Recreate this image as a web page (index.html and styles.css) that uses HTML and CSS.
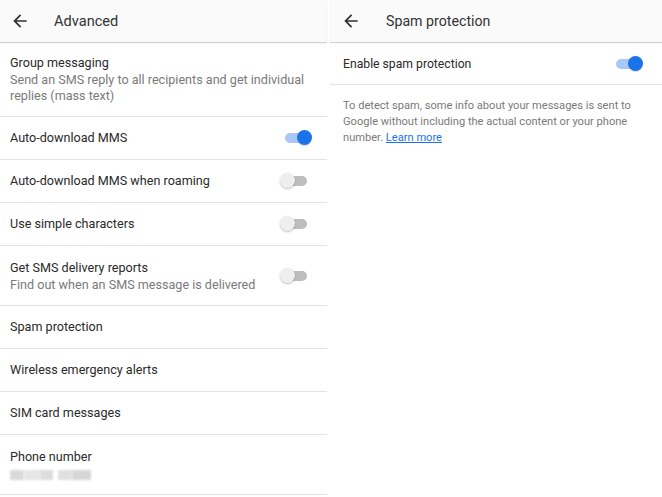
FILE: index.html
```html
<!DOCTYPE html>
<html>
<head>
<meta charset="utf-8">
<link rel="stylesheet" href="styles.css">
</head>
<body>
<div class="screens">
  <section class="panel left">
    <header class="appbar">
      <svg class="back" viewBox="0 0 24 24" width="20" height="20"><path d="M20 11H7.83l5.59-5.59L12 4l-8 8 8 8 1.41-1.41L7.83 13H20v-2z"/></svg>
      <span class="title">Advanced</span>
    </header>
    <div class="list">
      <div class="row tall">
        <div class="txt">
          <div class="primary">Group messaging</div>
          <div class="secondary">Send an SMS reply to all recipients and get individual replies (mass text)</div>
        </div>
      </div>
      <div class="row">
        <div class="txt"><div class="primary">Auto-download MMS</div></div>
        <span class="switch on"></span>
      </div>
      <div class="row">
        <div class="txt"><div class="primary">Auto-download MMS when roaming</div></div>
        <span class="switch"></span>
      </div>
      <div class="row">
        <div class="txt"><div class="primary">Use simple characters</div></div>
        <span class="switch"></span>
      </div>
      <div class="row two">
        <div class="txt">
          <div class="primary">Get SMS delivery reports</div>
          <div class="secondary">Find out when an SMS message is delivered</div>
        </div>
        <span class="switch"></span>
      </div>
      <div class="row">
        <div class="txt"><div class="primary">Spam protection</div></div>
      </div>
      <div class="row">
        <div class="txt"><div class="primary">Wireless emergency alerts</div></div>
      </div>
      <div class="row">
        <div class="txt"><div class="primary">SIM card messages</div></div>
      </div>
      <div class="row two">
        <div class="txt">
          <div class="primary">Phone number</div>
          <div class="blurred"><span class="b1"></span><span class="b2"></span><span class="b3"></span><span class="gap"></span><span class="b4"></span><span class="b5"></span></div>
        </div>
      </div>
    </div>
  </section>
  <section class="panel right">
    <header class="appbar">
      <svg class="back" viewBox="0 0 24 24" width="20" height="20"><path d="M20 11H7.83l5.59-5.59L12 4l-8 8 8 8 1.41-1.41L7.83 13H20v-2z"/></svg>
      <span class="title">Spam protection</span>
    </header>
    <div class="list">
      <div class="row">
        <div class="txt"><div class="primary">Enable spam protection</div></div>
        <span class="switch on"></span>
      </div>
      <p class="note">To detect spam, some info about your messages is sent to Google without including the actual content or your phone number. <a href="#">Learn more</a></p>
    </div>
  </section>
</div>
</body>
</html>
```

FILE: styles.css
```css
* { box-sizing: border-box; }
html, body { margin: 0; padding: 0; background: #fff; }
body {
  width: 662px;
  height: 497px;
  overflow: hidden;
  font-family: Roboto, "Noto Sans", Arial, sans-serif;
  color: #222;
}
.screens {
  display: flex;
  gap: 3px;
  height: 497px;
}
.panel { display: flex; flex-direction: column; }
.left { width: 327px; }
.right { flex: 1; }

.appbar {
  height: 42px;
  display: flex;
  align-items: center;
  background: #fafafa;
  box-shadow: 0 1px 1px rgba(0,0,0,0.18);
  position: relative;
  z-index: 1;
  margin-bottom: 1px;
}
.back { fill: #303030; margin-left: 10px; flex: none; }
.title {
  margin-left: 24px;
  font-size: 14.6px;
  color: #333;
}
.right .back { margin-left: 11px; }
.right .title { margin-left: 25px; font-size: 14.2px; }

.row {
  display: flex;
  align-items: center;
  min-height: 43px;
  padding: 0 20px 0 10px;
  border-bottom: 1px solid #e4e4e4;
}
.row.tall { min-height: 73px; padding-top: 11px; padding-bottom: 12px; }
.row.two { min-height: 60px; padding-top: 12px; padding-bottom: 11px; }
.txt { flex: 1; }
.primary { font-size: 12.6px; line-height: 18px; color: #2a2a2a; }
.secondary { font-size: 12.6px; line-height: 16px; color: #7a7a7a; }

.blurred { display: flex; height: 16px; align-items: center; margin-top: 1px; }
.blurred span { height: 10px; filter: blur(1px); }
.b1 { width: 14px; background: #d9d9d9; }
.b2 { width: 16px; background: #e6e6e6; }
.b3 { width: 13px; background: #dcdcdc; }
.gap { width: 5px; }
.b4 { width: 14px; background: #e0e0e0; }
.b5 { width: 19px; background: #d6d6d6; }

.switch {
  position: relative;
  width: 22px;
  height: 10px;
  border-radius: 5px;
  background: #bdbdbd;
  flex: none;
}
.switch::after {
  content: "";
  position: absolute;
  top: -3px;
  left: -5px;
  width: 15px;
  height: 15px;
  border-radius: 50%;
  background: #eeeeee;
  box-shadow: 0 1px 2px rgba(0,0,0,0.25);
}
.switch.on { background: #aac8f7; }
.switch.on::after {
  left: auto;
  right: -5px;
  background: #1a73e8;
  box-shadow: 0 1px 1px rgba(0,0,0,0.15);
}

.right .row { padding-left: 13px; padding-right: 24px; min-height: 42px; }
.right .primary { font-size: 12.2px; }
.note {
  margin: 0;
  padding: 13px 20px 0 13px;
  font-size: 11.1px;
  line-height: 16px;
  color: #7a7a7a;
}
.note a { color: #1a73e8; text-decoration: underline; }
```
